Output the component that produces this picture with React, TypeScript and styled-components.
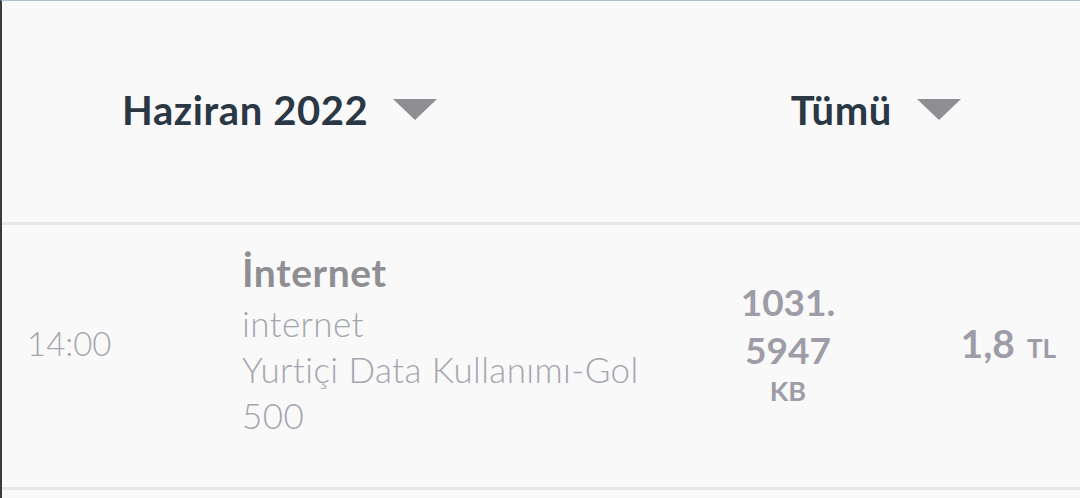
import React from "react";
import styled, { createGlobalStyle } from "styled-components";

const GlobalStyle = createGlobalStyle`
  html, body {
    margin: 0;
    padding: 0;
    background: #f9f9fa;
  }
  body {
    font-family: "Lato", "Noto Sans", sans-serif;
  }
`;

const Screen = styled.div`
  width: 1080px;
  height: 498px;
  box-sizing: border-box;
  background: #f9f9fa;
  border-top: 1px solid #a9bfd6;
  border-left: 2px solid #3a3a3c;
  display: flex;
  flex-direction: column;
  overflow: hidden;
`;

const Header = styled.div`
  height: 224px;
  flex: none;
  box-sizing: border-box;
  display: flex;
  align-items: center;
  justify-content: space-between;
  padding: 0 119px 4px 120px;
  border-bottom: 3px solid #e7e7e9;
`;

const Selector = styled.button`
  display: flex;
  align-items: center;
  gap: 25px;
  background: none;
  border: none;
  padding: 0;
  margin: 0;
  cursor: pointer;
  font-family: "Lato", "Noto Sans", sans-serif;
  font-size: 40px;
  font-weight: 700;
  letter-spacing: 0.6px;
  color: #2a3744;
  line-height: 48px;
`;

const Caret = styled.svg`
  width: 44px;
  height: 21px;
  display: block;
  margin-top: -1px;
`;

const Row = styled.div`
  height: 265px;
  flex: none;
  box-sizing: border-box;
  display: grid;
  grid-template-columns: 215px 430px 232px 1fr;
  align-items: center;
  padding: 14px 24px 40px 25px;
  border-bottom: 3px solid #e7e7e9;
`;

const Time = styled.div`
  font-size: 33px;
  font-weight: 300;
  color: #a4a4ac;
  line-height: 40px;
`;

const Details = styled.div`
  display: flex;
  flex-direction: column;
`;

const Title = styled.div`
  font-size: 39px;
  font-weight: 700;
  letter-spacing: 0.6px;
  color: #8e8e93;
  line-height: 48px;
  margin-bottom: 4px;
`;

const Line = styled.div`
  font-size: 35px;
  font-weight: 300;
  letter-spacing: 0.4px;
  color: #a5a5ad;
  line-height: 46px;
`;

const Amount = styled.div`
  display: flex;
  flex-direction: column;
  align-items: center;
  justify-self: center;
  text-align: center;
  color: #9e9da7;
`;

const AmountValue = styled.div`
  font-size: 37px;
  font-weight: 700;
  line-height: 48px;
`;

const Unit = styled.span<{ $size: number }>`
  font-size: ${(p) => p.$size}px;
  font-weight: 700;
  line-height: 34px;
`;

const Price = styled.div`
  justify-self: end;
  display: flex;
  align-items: baseline;
  gap: 12px;
  color: #9e9da7;
  font-size: 39px;
  font-weight: 700;
  line-height: 48px;
`;

const Triangle = () => (
  <Caret viewBox="0 0 44 21">
    <polygon points="0,0 44,0 22,21" fill="#8e8e93" />
  </Caret>
);

export default function App() {
  return (
    <>
      <GlobalStyle />
      <Screen>
        <Header>
          <Selector>
            Haziran 2022
            <Triangle />
          </Selector>
          <Selector>
            Tümü
            <Triangle />
          </Selector>
        </Header>
        <Row>
          <Time>14:00</Time>
          <Details>
            <Title>İnternet</Title>
            <Line>internet</Line>
            <Line>Yurtiçi Data Kullanımı-Gol 500</Line>
          </Details>
          <Amount>
            <AmountValue>
              1031.
              <br />
              5947
            </AmountValue>
            <Unit $size={27}>KB</Unit>
          </Amount>
          <Price>
            1,8
            <Unit $size={26}>TL</Unit>
          </Price>
        </Row>
      </Screen>
    </>
  );
}
